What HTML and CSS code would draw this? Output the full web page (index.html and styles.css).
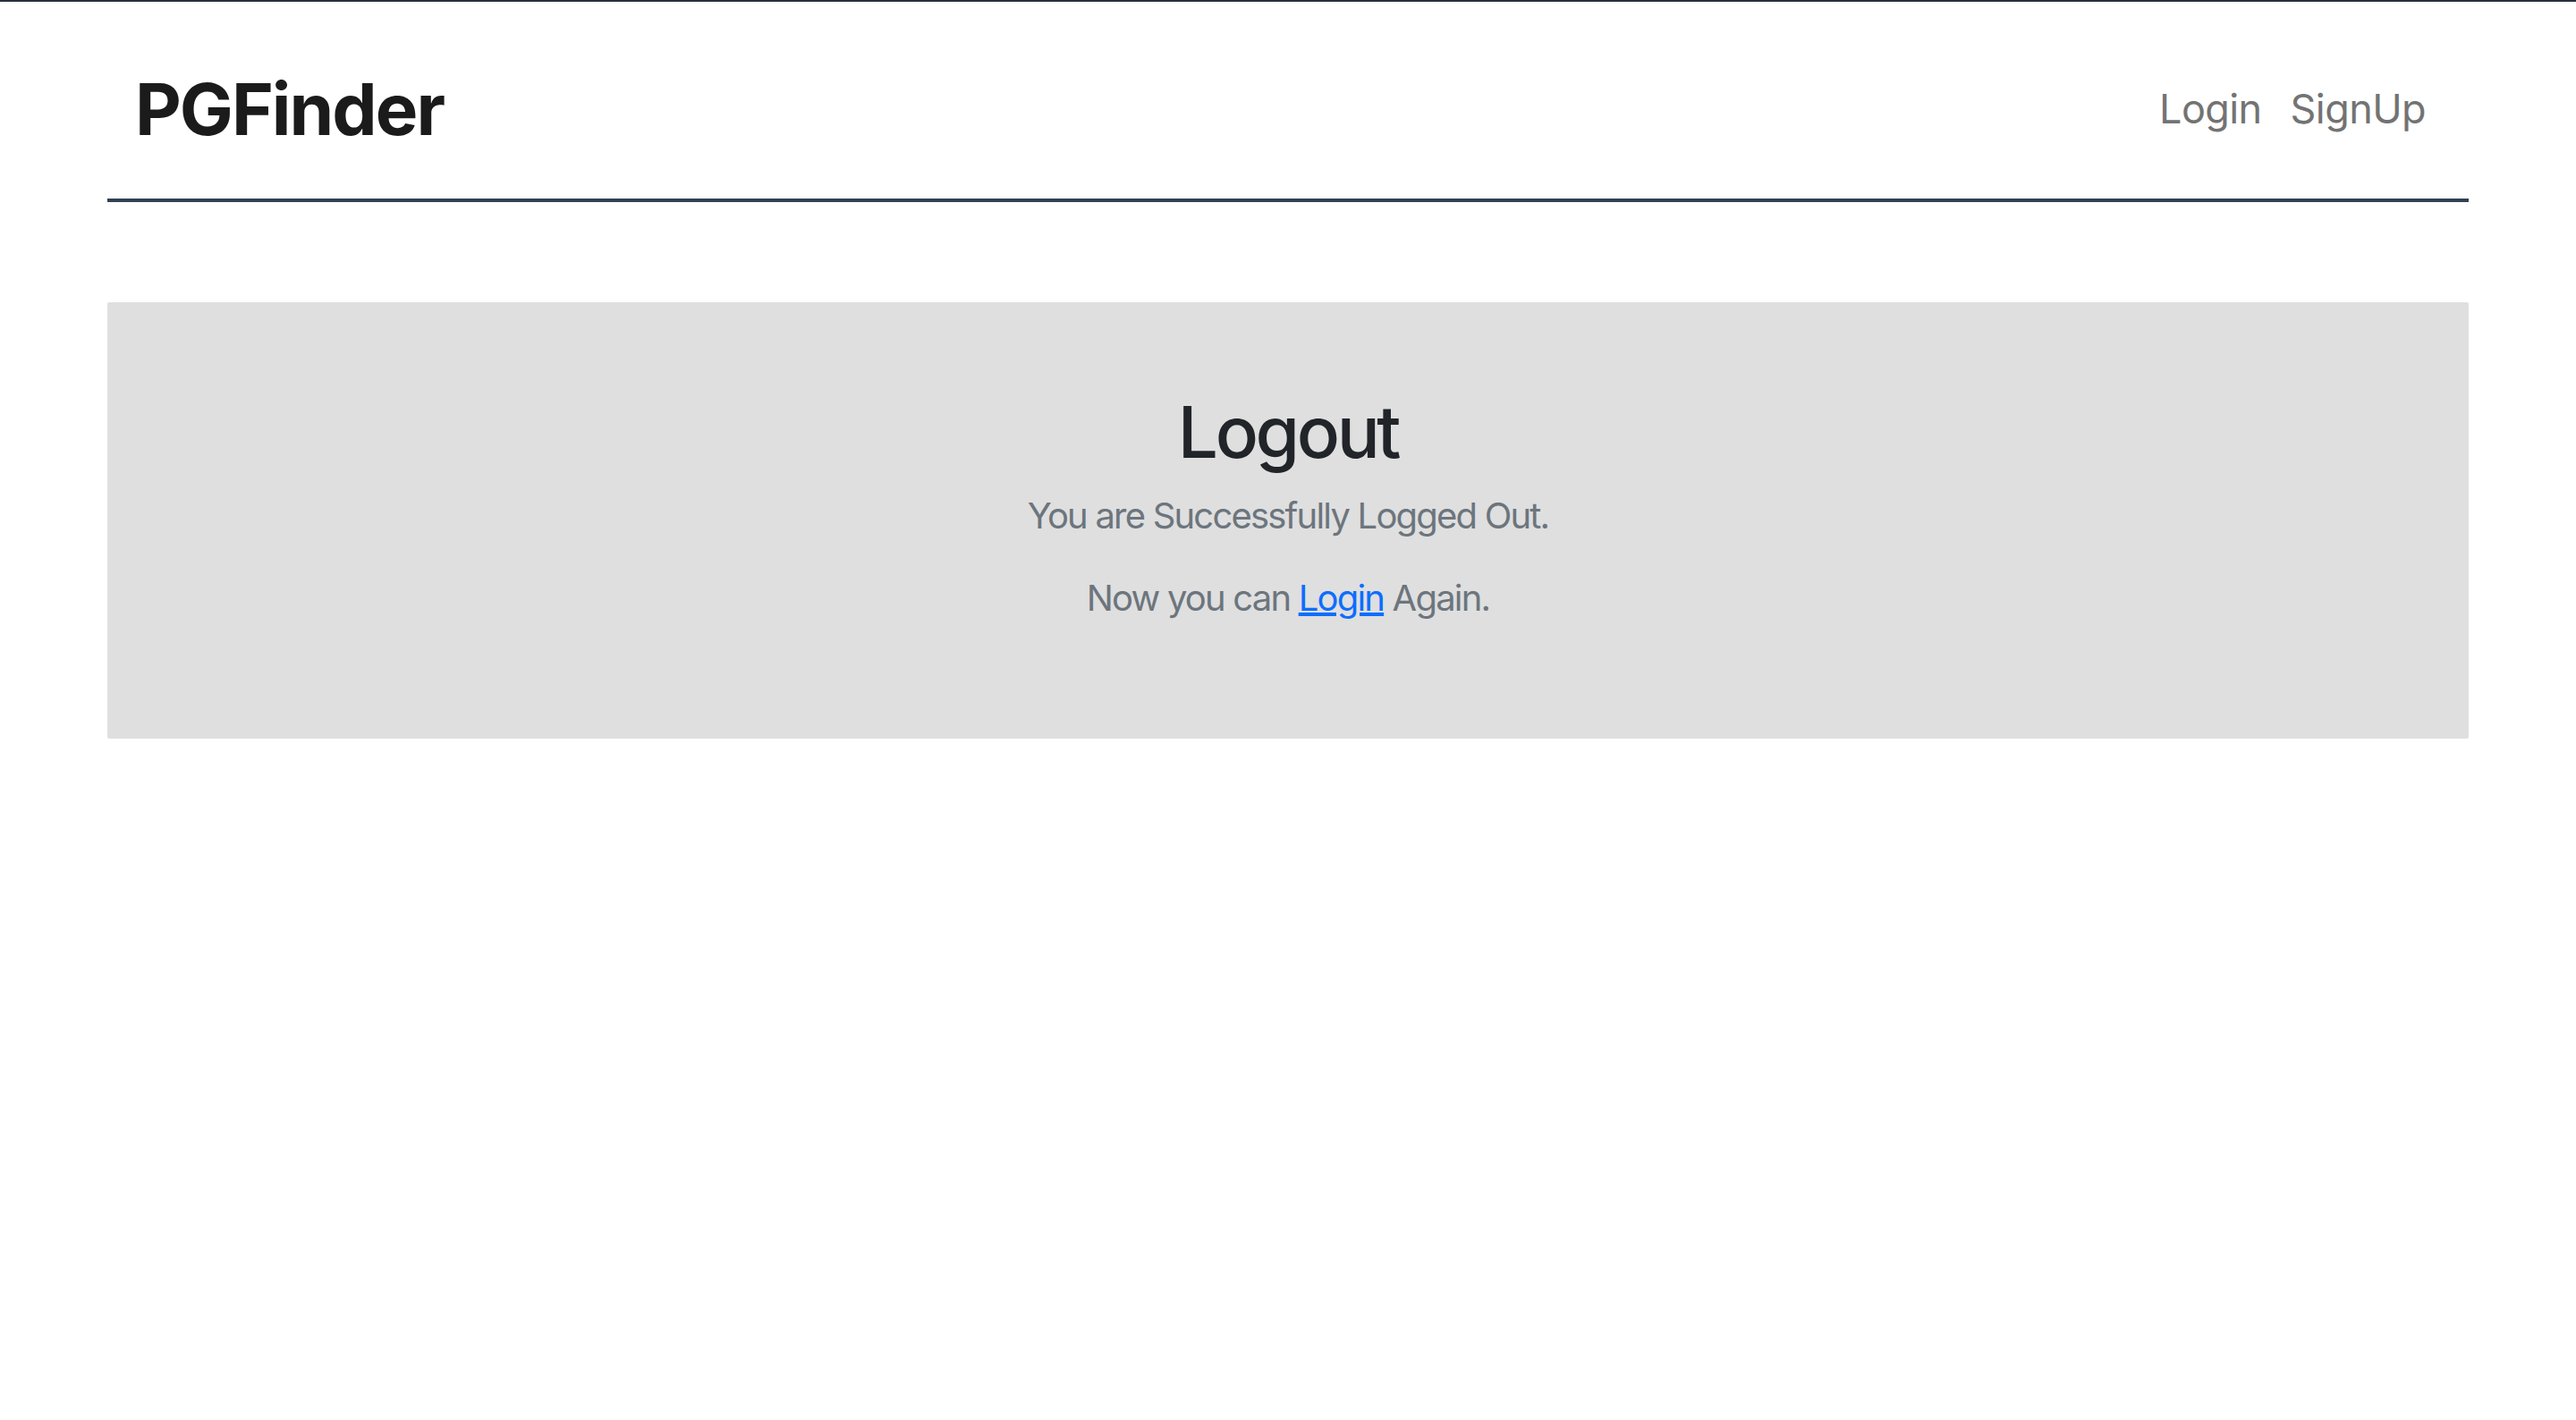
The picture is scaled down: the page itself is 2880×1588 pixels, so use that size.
FILE: index.html
```html
<!DOCTYPE html>
<html lang="en">
<head>
<meta charset="utf-8">
<title>PGFinder - Logout</title>
<link rel="stylesheet" href="styles.css">
</head>
<body>
<div class="container">
  <header class="site-header">
    <a href="#" class="brand">PGFinder</a>
    <nav class="nav">
      <a href="#" class="nav-link">Login</a>
      <a href="#" class="nav-link">SignUp</a>
    </nav>
  </header>
  <section class="panel">
    <h1 class="panel-title">Logout</h1>
    <p class="lead">You are Successfully Logged Out.</p>
    <p class="lead">Now you can <a href="#" class="inline-link">Login</a> Again.</p>
  </section>
</div>
</body>
</html>
```
FILE: styles.css
```css
html, body {
  margin: 0;
  padding: 0;
  background: #ffffff;
}
body {
  border-top: 2px solid #2b2e3b;
  font-family: Inter, "Noto Sans", "Liberation Sans", sans-serif;
  font-size: 32px;
  line-height: 1.5;
  color: #212529;
}
.container {
  width: 2640px;
  margin: 0 auto;
}
.site-header {
  display: flex;
  align-items: center;
  justify-content: space-between;
  padding: 60px 32px 40px 31px;
  border-bottom: 4px solid #334155;
}
.brand {
  font-size: 80px;
  line-height: 120px;
  font-weight: 700;
  letter-spacing: -2px;
  color: #1b1b1b;
  text-decoration: none;
}
.nav {
  display: flex;
  align-items: center;
}
.nav-link {
  font-size: 45px;
  line-height: 72px;
  letter-spacing: -0.6px;
  padding: 0 16px;
  color: #737373;
  text-decoration: none;
}
.panel {
  margin-top: 112px;
  padding: 97px 48px 95px;
  background: #dfdfdf;
  border-radius: 2px;
  text-align: center;
}
.panel-title {
  margin: 0 0 16px;
  font-size: 80px;
  line-height: 1.2;
  font-weight: 500;
  letter-spacing: -3.4px;
  color: #212529;
}
.lead {
  margin: 0 0 32px;
  font-size: 40px;
  line-height: 60px;
  letter-spacing: -1.8px;
  color: #6c757d;
}
.inline-link {
  color: #0d6efd;
  text-decoration: underline;
}
```
